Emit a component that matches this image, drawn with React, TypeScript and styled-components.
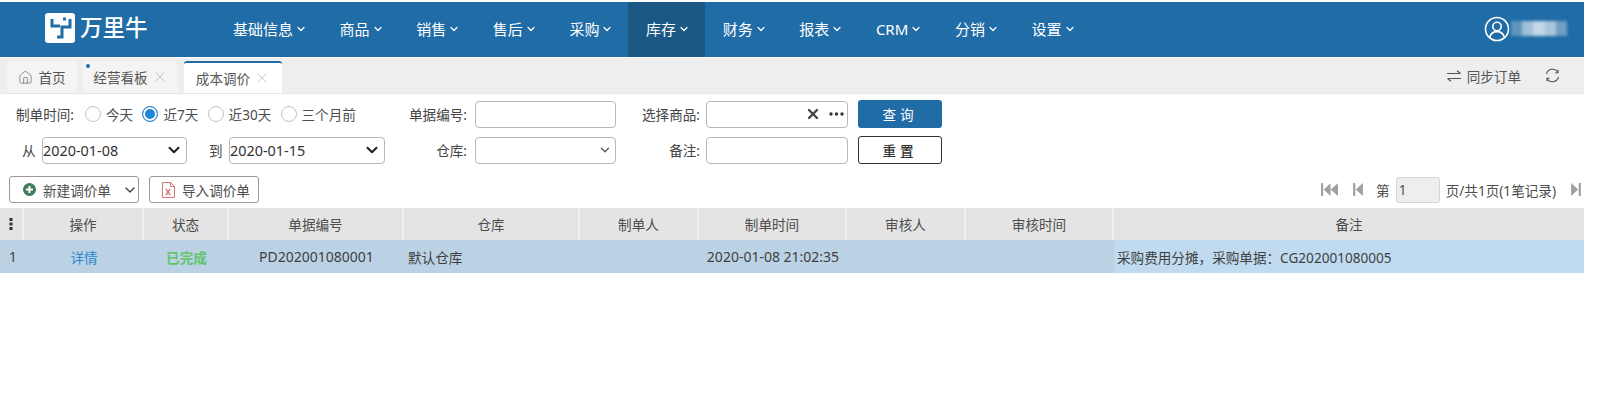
import styled, { createGlobalStyle } from "styled-components";
import { ChevronDown, House, X } from "lucide-react";

const GlobalStyle = createGlobalStyle`
    html, body {
        margin: 0;
        padding: 0;
        background: #ffffff;
    }
    body {
        font-family: "Noto Sans", "Noto Sans CJK SC", sans-serif;
        font-size: 13.6px;
        color: #444444;
    }
`

const Page = styled.div`
    width: 1584px;
    padding-top: 2px;
`

const TopBar = styled.header`
    height: 55px;
    background: #206ca6;
    display: flex;
    align-items: stretch;
    color: #ffffff;
`

const Brand = styled.div`
    width: 215px;
    padding-left: 45px;
    box-sizing: border-box;
    display: flex;
    align-items: center;
    gap: 5px;
    padding-bottom: 3px;
`

const BrandName = styled.span`
    font-size: 22.5px;
    font-weight: 500;
    line-height: 1;
`

const Nav = styled.nav`
    display: flex;
    flex: 1;
`

const NavItem = styled.div<{ $active?: boolean }>`
    display: flex;
    align-items: center;
    gap: 2px;
    padding: 0 14.6px 2px 18px;
    font-size: 15px;
    background: ${(p) => (p.$active ? "#1b5884" : "transparent")};
`

const UserBox = styled.div`
    width: 100px;
    display: flex;
    align-items: center;
    margin-bottom: 2px;
`

const BlurName = styled.div`
    display: flex;
    width: 56px;
    height: 15px;
    margin-left: 1px;
    filter: blur(1.5px);
`

const BlurCell = styled.span<{ $tone: string }>`
    flex: 1;
    background: ${(p) => p.$tone};
`

const TabStrip = styled.div`
    margin-top: 1px;
    height: 35px;
    background: #eeeeee;
    display: flex;
    align-items: flex-end;
    padding-left: 7px;
    gap: 6px;
    border-bottom: 1px solid #e6e6e6;
`

const Tab = styled.div<{ $active?: boolean; $w: number }>`
    position: relative;
    width: ${(p) => p.$w}px;
    height: 32px;
    box-sizing: border-box;
    display: flex;
    align-items: center;
    justify-content: center;
    gap: 4px;
    color: #555555;
    background: ${(p) => (p.$active ? "#ffffff" : "#f4f4f4")};
    border-top: ${(p) => (p.$active ? "2px solid #206ca6" : "none")};
    border-radius: 3px 3px 0 0;
`

const HomeIcon = styled(House)`
    margin-right: 1px;
`

const TabDot = styled.span`
    position: absolute;
    left: 3px;
    top: 3px;
    width: 4px;
    height: 4px;
    border-radius: 50%;
    background: #206ca6;
`

const StripActions = styled.div`
    margin-left: auto;
    align-self: center;
    display: flex;
    align-items: center;
    padding-right: 24px;
    color: #555555;
`

const SyncLabel = styled.span`
    margin: 0 24px 0 6px;
`

const FilterGrid = styled.form`
    display: grid;
    grid-template-columns: 386px 65px 149px 84px 158px 94px;
    grid-template-rows: 28px 28px;
    row-gap: 8px;
    align-items: center;
    padding: 6px 0 0 16px;
`

const RadioRow = styled.div`
    display: flex;
    align-items: center;
`

const FieldLabel = styled.span`
    text-align: right;
    white-space: nowrap;
`

const TimeLabel = styled(FieldLabel)`
    margin-right: 11px;
`

const RadioGroup = styled.label`
    display: flex;
    align-items: center;
    gap: 5px;
    margin-right: 9.2px;
    color: #4d4d4d;
`

const RadioDot = styled.span<{ $on?: boolean }>`
    width: 16px;
    height: 16px;
    box-sizing: border-box;
    border-radius: 50%;
    border: 1px solid ${(p) => (p.$on ? "#2a7fc6" : "#c4c4c4")};
    background: ${(p) => (p.$on ? "#1e88d8" : "#ffffff")};
    box-shadow: ${(p) => (p.$on ? "inset 0 0 0 2px #ffffff" : "none")};
`

const DateRow = styled.div`
    display: flex;
    align-items: center;
    padding-left: 6px;
`

const DateWord = styled.span`
    width: 20px;
`

const DateGap = styled.span`
    width: 22px;
`

const SelectBox = styled.div<{ $w: number }>`
    width: ${(p) => p.$w}px;
    height: 27px;
    box-sizing: border-box;
    border: 1px solid #b8b8b8;
    border-radius: 4px;
    display: flex;
    align-items: center;
    justify-content: space-between;
    padding-right: 3px;
    font-size: 14.4px;
    color: #333333;
    background: #ffffff;
`

const TextBox = styled.div<{ $w: number }>`
    width: ${(p) => p.$w}px;
    height: 27px;
    box-sizing: border-box;
    border: 1px solid #b8b8b8;
    border-radius: 4px;
    display: flex;
    align-items: center;
    justify-content: flex-end;
    gap: 8px;
    padding-right: 3px;
    background: #ffffff;
`

const FieldCell = styled.div<{ $pad: number }>`
    padding-left: ${(p) => p.$pad}px;
`

const SearchButton = styled.button`
    width: 84px;
    height: 28px;
    background: #206ca6;
    color: #ffffff;
    border: none;
    border-radius: 3px;
    font: inherit;
    letter-spacing: 4px;
`

const ResetButton = styled.button`
    width: 84px;
    height: 28px;
    background: #ffffff;
    color: #333333;
    border: 1.5px solid #333333;
    border-radius: 3px;
    font: inherit;
    font-weight: 500;
    letter-spacing: 4px;
`

const ActionBar = styled.div`
    display: flex;
    align-items: center;
    padding: 12px 3px 0 9px;
    gap: 10px;
    height: 27px;
`

const ToolButton = styled.div<{ $w: number; $pad: number }>`
    width: ${(p) => p.$w}px;
    height: 27px;
    box-sizing: border-box;
    padding-left: ${(p) => p.$pad}px;
    border: 1px solid #9a9a9a;
    border-radius: 3px;
    display: flex;
    align-items: center;
    gap: 7px;
    color: #4d4d4d;
`

const ButtonCaret = styled.span`
    display: flex;
    margin-left: 4px;
`

const Pager = styled.div`
    margin-left: auto;
    display: flex;
    align-items: center;
    color: #4d4d4d;
`

const PageInput = styled.div`
    width: 44px;
    height: 26px;
    box-sizing: border-box;
    margin: 0 6px;
    padding-left: 2px;
    background: #eeeeee;
    border: 1px solid #d6d6d6;
    border-radius: 3px;
    display: flex;
    align-items: center;
`

const PagerIcon = styled.svg<{ $before?: number; $after?: number }>`
    margin-left: ${(p) => p.$before || 0}px;
    margin-right: ${(p) => p.$after || 0}px;
    fill: #a0a0a0;
`

const Table = styled.div`
    margin-top: 5px;
`

const COLUMNS = "24px 120px 85px 175px 176px 119px 148px 119px 148px 470px";

const HeadRow = styled.div`
    display: grid;
    grid-template-columns: ${COLUMNS};
    height: 32px;
    background: #e4e4e4;
`

const HeadCell = styled.div`
    display: flex;
    align-items: center;
    justify-content: center;
    border-right: 2px solid #f0f0f0;
    box-sizing: border-box;
    color: #4d4d4d;
    &:last-child {
        border-right: none;
    }
`

const BodyRow = styled.div`
    display: grid;
    grid-template-columns: ${COLUMNS};
    height: 33px;
    background: #bbd2e5;
`

const Cell = styled.div<{ $align?: string; $color?: string; $bold?: boolean; $bg?: string; $size?: number }>`
    display: flex;
    align-items: center;
    justify-content: ${(p) => p.$align || "center"};
    padding: 0 4px;
    min-width: 0;
    white-space: nowrap;
    color: ${(p) => p.$color || "#3f3f3f"};
    font-weight: ${(p) => (p.$bold ? 700 : 400)};
    font-size: ${(p) => p.$size || 13.6}px;
    background: ${(p) => p.$bg || "transparent"};
`

const RowNumber = styled(Cell)`
    padding-left: 9px;
`

const RemarkCell = styled(Cell)`
    padding-left: 3px;
`

const navItems = ["基础信息", "商品", "销售", "售后", "采购", "库存", "财务", "报表", "CRM", "分销", "设置"];
const columns = ["操作", "状态", "单据编号", "仓库", "制单人", "制单时间", "审核人", "审核时间", "备注"];

function Caret({ color = "#ffffff", size = 12, stroke = 2.4 }: { color?: string; size?: number; stroke?: number }) {
    return <ChevronDown size={size} color={color} strokeWidth={stroke} />;
}

function LogoMark() {
    return (
        <svg width="30" height="30" viewBox="0 0 30 30">
            <rect width="30" height="30" rx="3" fill="#ffffff" />
            <g fill="none" stroke="#206ca6" strokeWidth="3">
                <path d="M7 6v7h8" />
                <path d="M25 6v8h-8v10h-5" />
                <path d="M18 6h3" />
            </g>
        </svg>
    );
}

function UserIcon() {
    return (
        <svg width="26" height="26" viewBox="0 0 26 26" fill="none" stroke="#ffffff" strokeWidth="1.6">
            <circle cx="13" cy="13" r="11.5" />
            <circle cx="13" cy="10.5" r="4.2" />
            <path d="M5.800 21c1-3.600 3.800-5.400 7.200-5.400s6.200 1.800 7.200 5.400" />
        </svg>
    );
}

function SyncIcon() {
    return (
        <svg width="14" height="12" viewBox="0 0 14 12" fill="none" stroke="#555555" strokeWidth="1.1">
            <path d="M0 3.500h13.500M10 .8l3.500 2.700" />
            <path d="M14 8.500H.5M4 11.200.5 8.500" />
        </svg>
    );
}

function RefreshIcon() {
    return (
        <svg width="15" height="15" viewBox="0 0 15 15" fill="none" stroke="#555555" strokeWidth="1.1">
            <path d="M1.500 6A6.200 6.200 0 0 1 13 4.500M13 1.800v2.900h-2.700" />
            <path d="M13.500 9A6.200 6.200 0 0 1 2 10.500M2 13.200v-2.900h2.700" />
        </svg>
    );
}

function PlusCircle() {
    return (
        <svg width="13" height="13" viewBox="0 0 13 13">
            <circle cx="6.500" cy="6.500" r="6.500" fill="#3f7d5c" />
            <path d="M6.500 3v7M3 6.500h7" stroke="#ffffff" strokeWidth="2" />
        </svg>
    );
}

function ExcelIcon() {
    return (
        <svg width="13" height="16" viewBox="0 0 13 16" fill="none" stroke="#d9776c" strokeWidth="1">
            <path d="M.5.500h8l4 4v11H.5z" />
            <path d="M8.500.500v4h4" />
            <path d="M3.800 7l4.400 6M8.200 7l-4.400 6" strokeWidth="1.300" />
        </svg>
    );
}

function DotsVertical() {
    return (
        <svg width="4" height="12" viewBox="0 0 4 12" fill="#333333">
            <rect x="0.500" width="3" height="3" />
            <rect x="0.500" y="4.500" width="3" height="3" />
            <rect x="0.500" y="9" width="3" height="3" />
        </svg>
    );
}

function DotsHorizontal() {
    return (
        <svg width="15" height="4" viewBox="0 0 15 4" fill="#333333">
            <circle cx="2" cy="2" r="1.700" />
            <circle cx="7.500" cy="2" r="1.700" />
            <circle cx="13" cy="2" r="1.700" />
        </svg>
    );
}

export default function App() {
    return (
        <Page>
            <GlobalStyle />
            <TopBar>
                <Brand>
                    <LogoMark />
                    <BrandName>万里牛</BrandName>
                </Brand>
                <Nav>
                    {navItems.map((item) => (
                        <NavItem key={item} $active={item === "库存"}>
                            {item}
                            <Caret />
                        </NavItem>
                    ))}
                </Nav>
                <UserBox>
                    <UserIcon />
                    <BlurName>
                        <BlurCell $tone="#5f94bd" />
                        <BlurCell $tone="#9fc0da" />
                        <BlurCell $tone="#c3d8e8" />
                        <BlurCell $tone="#a9c6dc" />
                        <BlurCell $tone="#6f9fc4" />
                    </BlurName>
                </UserBox>
            </TopBar>

            <TabStrip>
                <Tab $w={70}>
                    <HomeIcon size={15} strokeWidth={1} />
                    首页
                </Tab>
                <Tab $w={95}>
                    <TabDot />
                    经营看板
                    <X size={16} strokeWidth={1} color="#aaaaaa" />
                </Tab>
                <Tab $w={98} $active>
                    成本调价
                    <X size={16} strokeWidth={1} color="#aaaaaa" />
                </Tab>
                <StripActions>
                    <SyncIcon />
                    <SyncLabel>同步订单</SyncLabel>
                    <RefreshIcon />
                </StripActions>
            </TabStrip>

            <FilterGrid>
                <RadioRow>
                    <TimeLabel>制单时间:</TimeLabel>
                    <RadioGroup>
                        <RadioDot />
                        今天
                    </RadioGroup>
                    <RadioGroup>
                        <RadioDot $on />
                        近7天
                    </RadioGroup>
                    <RadioGroup>
                        <RadioDot />
                        近30天
                    </RadioGroup>
                    <RadioGroup>
                        <RadioDot />
                        三个月前
                    </RadioGroup>
                </RadioRow>
                <FieldLabel>单据编号:</FieldLabel>
                <FieldCell $pad={8}>
                    <TextBox $w={141} />
                </FieldCell>
                <FieldLabel>选择商品:</FieldLabel>
                <FieldCell $pad={6}>
                    <TextBox $w={142}>
                        <X size={16} strokeWidth={3.6} color="#444444" />
                        <DotsHorizontal />
                    </TextBox>
                </FieldCell>
                <SearchButton type="button">查询</SearchButton>

                <DateRow>
                    <DateWord>从</DateWord>
                    <SelectBox $w={145}>
                        2020-01-08
                        <Caret color="#222222" size={18} stroke={2.8} />
                    </SelectBox>
                    <DateGap />
                    <DateWord>到</DateWord>
                    <SelectBox $w={156}>
                        2020-01-15
                        <Caret color="#222222" size={18} stroke={2.8} />
                    </SelectBox>
                </DateRow>
                <FieldLabel>仓库:</FieldLabel>
                <FieldCell $pad={8}>
                    <SelectBox $w={141}>
                        <span />
                        <Caret color="#555555" size={14} stroke={2.2} />
                    </SelectBox>
                </FieldCell>
                <FieldLabel>备注:</FieldLabel>
                <FieldCell $pad={6}>
                    <TextBox $w={142} />
                </FieldCell>
                <ResetButton type="button">重置</ResetButton>
            </FilterGrid>

            <ActionBar>
                <ToolButton $w={130} $pad={13}>
                    <PlusCircle />
                    新建调价单
                    <ButtonCaret>
                        <Caret color="#444444" size={16} stroke={2} />
                    </ButtonCaret>
                </ToolButton>
                <ToolButton $w={110} $pad={12}>
                    <ExcelIcon />
                    导入调价单
                </ToolButton>
                <Pager>
                    <PagerIcon $after={15} width="17" height="13" viewBox="0 0 16 12">
                        <path d="M0 0h2v12H0zM2.500 6 9 0v12zM9 6l7-6v12z" />
                    </PagerIcon>
                    <PagerIcon $after={13} width="10" height="13" viewBox="0 0 9 12">
                        <path d="M0 0h2v12H0zM2.500 6 9 0v12z" />
                    </PagerIcon>
                    第
                    <PageInput>1</PageInput>
                    页/共1页(1笔记录)
                    <PagerIcon $before={15} width="10" height="13" viewBox="0 0 9 12">
                        <path d="M0 0l6.500 6L0 12zM7 0h2v12H7z" />
                    </PagerIcon>
                </Pager>
            </ActionBar>

            <Table>
                <HeadRow>
                    <HeadCell>
                        <DotsVertical />
                    </HeadCell>
                    {columns.map((col) => (
                        <HeadCell key={col}>{col}</HeadCell>
                    ))}
                </HeadRow>
                <BodyRow>
                    <RowNumber $align="flex-start">1</RowNumber>
                    <Cell $color="#2b87c9">详情</Cell>
                    <Cell $color="#63c46c" $bold>已完成</Cell>
                    <Cell $size={14}>PD202001080001</Cell>
                    <Cell $align="flex-start">默认仓库</Cell>
                    <Cell />
                    <Cell $size={14}>2020-01-08 21:02:35</Cell>
                    <Cell />
                    <Cell />
                    <RemarkCell $align="flex-start" $bg="#c0dbf0">采购费用分摊，采购单据：CG202001080005</RemarkCell>
                </BodyRow>
            </Table>
        </Page>
    );
}
